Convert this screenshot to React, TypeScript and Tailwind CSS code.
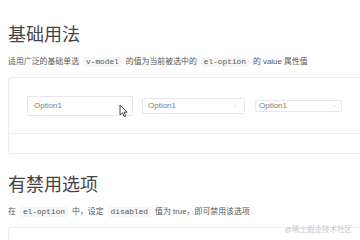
import { ChevronDown } from 'lucide-react'

const cjk = "font-['Helvetica_Neue','Liberation_Sans','Noto_Sans_CJK_SC',sans-serif]"

function Code({ children }: { children: string }) {
  return (
    <code className="mx-[4px] rounded-[2px] bg-[#f6f6f7] px-[3px] py-[1px] font-['Liberation_Mono',monospace] text-[7.8px] text-[#555]">
      {children}
    </code>
  )
}

function Select({ width, height, text, pad }: { width: string; height: string; text: string; pad: string }) {
  return (
    <div className={`flex items-center justify-between rounded-[2px] border border-[#e6e7ea] bg-white ${width} ${height} ${pad}`}>
      <span className="text-[8px] leading-none text-[#808080]">{text}</span>
      <ChevronDown className="h-[6px] w-[6px] text-[#bbbbbb]" strokeWidth={2} />
    </div>
  )
}

export default function App() {
  return (
    <div className={`relative h-[240px] w-[360px] overflow-hidden bg-white pl-2 ${cjk}`}>
      {/* 基础用法 */}
      <h3 className="pt-[24px] text-[18px] leading-[22px] font-normal text-[#444]">基础用法</h3>
      <p className="mt-[10px] whitespace-nowrap text-[7.9px] leading-[12px] text-[#555]">
        适用广泛的基础单选<Code>v-model</Code>的值为当前被选中的<Code>el-option</Code>的 value 属性值
      </p>

      <div className="mt-[9px] w-[400px] rounded-l-[3px] border border-r-0 border-[#ededed]">
        <div className="flex h-[55px] items-center pl-[18px]">
          <Select width="w-[106px]" height="h-[20px]" text="Option1" pad="pl-[6px] pr-[8px]" />
          <div className="ml-[9px]">
            <Select width="w-[103px]" height="h-[16px]" text="Option1" pad="pl-[5px] pr-[6px]" />
          </div>
          <div className="ml-[10px]">
            <Select width="w-[87px]" height="h-[12px]" text="Option1" pad="pl-[3px] pr-[4px]" />
          </div>
        </div>
        <div className="h-[20px] border-t border-[#ededed]" />
      </div>

      {/* 有禁用选项 */}
      <h3 className="mt-[20px] text-[18px] leading-[22px] font-normal text-[#444]">有禁用选项</h3>
      <p className="mt-[10px] whitespace-nowrap text-[7.9px] leading-[12px] text-[#555]">
        在<Code>el-option</Code>中，设定<Code>disabled</Code>值为 true，即可禁用该选项
      </p>
      <div className="mt-[9px] h-[30px] w-[400px] rounded-l-[3px] border border-r-0 border-[#ededed]" />

      {/* mouse cursor */}
      <svg className="absolute left-[119px] top-[104px]" width="9" height="14" viewBox="0 0 9 14">
        <path d="M1 1 L1 11 L3.5 8.8 L5.3 12.8 L6.8 12.1 L5 8.2 L8.2 8.2 Z" fill="#fff" stroke="#333" strokeWidth="0.9" strokeLinejoin="round" />
      </svg>

      {/* watermark */}
      <div className="absolute right-[8px] top-[224px] text-[7.5px] leading-[12px] text-[#c4c6ca]">@稀土掘金技术社区</div>
    </div>
  )
}
